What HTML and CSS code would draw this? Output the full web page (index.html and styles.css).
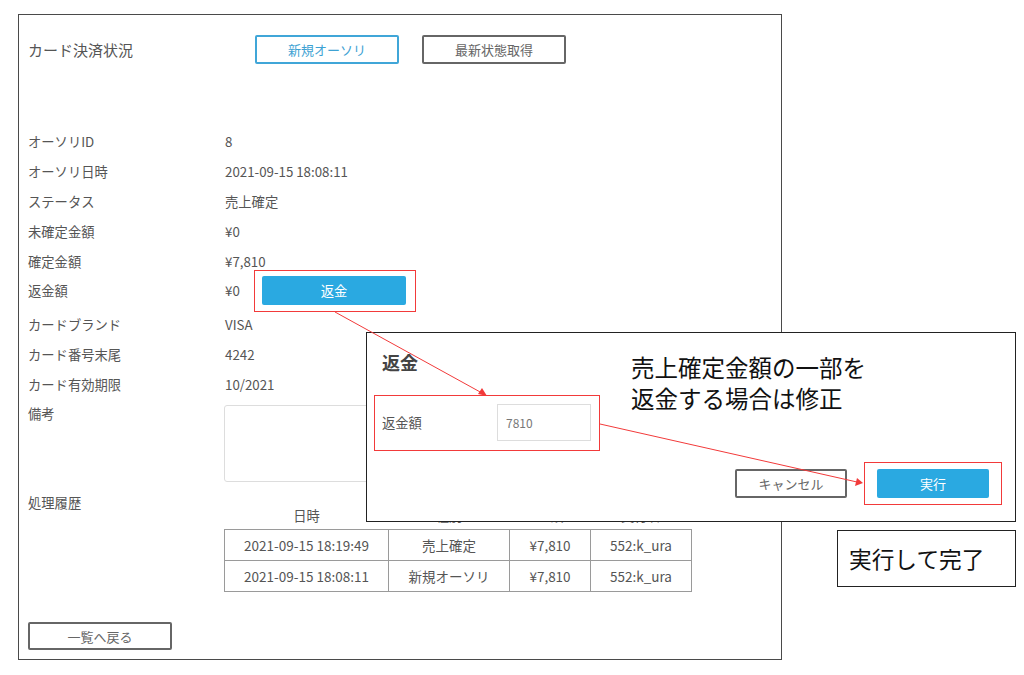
FILE: index.html
```html
<!DOCTYPE html>
<html lang="ja">
<head>
    <meta charset="UTF-8">
    <meta name="viewport" content="width=device-width, initial-scale=1.0">
    <title>カード決済状況</title>
    <link rel="stylesheet" href="styles.css">
</head>
<body>
    <div class="stage">
        <div class="panel">
            <div class="panel-head">
                <div class="panel-title">カード決済状況</div>
                <button class="btn btn-outline-blue">新規オーソリ</button>
                <button class="btn btn-outline">最新状態取得</button>
            </div>

            <div class="info">
                <div class="row"><div class="label">オーソリID</div><div class="value">8</div></div>
                <div class="row"><div class="label">オーソリ日時</div><div class="value">2021-09-15 18:08:11</div></div>
                <div class="row"><div class="label">ステータス</div><div class="value">売上確定</div></div>
                <div class="row"><div class="label">未確定金額</div><div class="value">¥0</div></div>
                <div class="row"><div class="label">確定金額</div><div class="value">¥7,810</div></div>
                <div class="row row-refund">
                    <div class="label">返金額</div>
                    <div class="value value-short">¥0</div>
                    <button class="btn btn-blue btn-refund">返金</button>
                </div>
                <div class="row"><div class="label">カードブランド</div><div class="value">VISA</div></div>
                <div class="row"><div class="label">カード番号末尾</div><div class="value">4242</div></div>
                <div class="row"><div class="label">カード有効期限</div><div class="value">10/2021</div></div>
                <div class="row row-memo">
                    <div class="label">備考</div>
                    <textarea class="memo"></textarea>
                </div>
                <div class="row row-history">
                    <div class="label">処理履歴</div>
                    <table class="history">
                        <thead>
                            <tr><th class="c-date">日時</th><th class="c-type">種別</th><th class="c-amount">金額</th><th class="c-user">実行者</th></tr>
                        </thead>
                        <tbody>
                            <tr><td>2021-09-15 18:19:49</td><td>売上確定</td><td>¥7,810</td><td>552:k_ura</td></tr>
                            <tr><td>2021-09-15 18:08:11</td><td>新規オーソリ</td><td>¥7,810</td><td>552:k_ura</td></tr>
                        </tbody>
                    </table>
                </div>
            </div>

            <button class="btn btn-outline btn-back">一覧へ戻る</button>
        </div>

        <!-- refund dialog -->
        <div class="dialog">
            <div class="dialog-title">返金</div>
            <div class="dialog-field">
                <div class="dialog-label">返金額</div>
                <input class="dialog-input" type="text" value="7810">
            </div>
            <div class="dialog-foot">
                <button class="btn btn-outline btn-dialog">キャンセル</button>
                <button class="btn btn-blue btn-dialog">実行</button>
            </div>
        </div>

        <!-- annotations -->
        <div class="mark mark-refund"></div>
        <div class="mark mark-field"></div>
        <div class="mark mark-run"></div>
        <div class="note note-edit">売上確定金額の一部を<br>返金する場合は修正</div>
        <div class="note note-done">実行して完了</div>

        <svg class="arrows" width="1024" height="675" viewBox="0 0 1024 675">
            <line x1="335" y1="312" x2="482" y2="393" stroke="#f23a3a" stroke-width="1"/>
            <polygon points="487,396 478,394 482,388" fill="#f23a3a"/>
            <line x1="600" y1="424" x2="857" y2="482" stroke="#f23a3a" stroke-width="1"/>
            <polygon points="863,483 855,486 857,478" fill="#f23a3a"/>
        </svg>
    </div>
</body>
</html>
```

FILE: styles.css
```css
body, html {
    margin: 0;
    background-color: #fff;
    font-family: "Noto Sans CJK JP", "Noto Sans", sans-serif;
    color: #555;
}
.stage {
    position: relative;
    width: 1024px;
    height: 675px;
    overflow: hidden;
    padding-top: 14px;
    padding-left: 18px;
    box-sizing: border-box;
}
.panel {
    width: 764px;
    height: 646px;
    box-sizing: border-box;
    border: 1px solid #4a4a4a;
    padding: 20px 9px 0;
}
.panel-head {
    display: flex;
    align-items: center;
    height: 28px;
}
.panel-title {
    width: 227px;
    font-size: 15px;
    color: #555;
}
.btn {
    font-family: inherit;
    font-size: 13px;
    background: #fff;
    cursor: pointer;
    padding: 0;
    box-sizing: border-box;
}
.btn-outline-blue {
    width: 144px;
    height: 29px;
    border: 2px solid #40a6d8;
    border-radius: 2px;
    color: #3ea2d3;
}
.btn-outline {
    width: 144px;
    height: 29px;
    border: 2px solid #666;
    border-radius: 2px;
    color: #666;
}
.panel-head .btn-outline {
    margin-left: 23px;
}
.btn-blue {
    background-color: #2aa9e1;
    border: none;
    border-radius: 2px;
    color: #fff;
}

.info {
    margin-top: 63px;
}
.row {
    display: flex;
    align-items: center;
    height: 30px;
    font-size: 13.3px;
}
.label {
    width: 197px;
    flex-shrink: 0;
    color: #555;
}
.value {
    color: #555;
}
.row-refund {
    height: 33px;
    align-items: flex-start;
}
.row-refund .label, .row-refund .value {
    line-height: 30px;
}
.value-short {
    width: 37px;
}
.btn-refund {
    width: 144px;
    height: 29px;
    font-size: 13.3px;
}
.row-memo {
    height: auto;
    align-items: flex-start;
}
.row-memo .label {
    line-height: 30px;
}
.memo {
    margin-top: 6px;
    margin-left: -1px;
    width: 290px;
    height: 77px;
    box-sizing: border-box;
    border: 1px solid #ddd;
    border-radius: 3px;
    resize: none;
}
.row-history {
    height: auto;
    align-items: flex-start;
    margin-top: 6px;
}
.row-history .label {
    line-height: 30px;
}
.history {
    margin-top: 15px;
    margin-left: -1px;
    border-collapse: collapse;
    font-size: 13.5px;
    color: #555;
}
.history th {
    font-weight: normal;
    height: 26px;
    padding: 0;
    vertical-align: top;
    line-height: 26px;
    font-size: 13.3px;
}
.history td {
    border: 1px solid #9a9a9a;
    height: 30px;
    padding: 0;
    text-align: center;
}
.c-date { width: 164px; }
.c-type { width: 121px; }
.c-amount { width: 81px; }
.c-user { width: 101px; }

.btn-back {
    display: block;
    margin-top: 30px;
    height: 28px;
}

.dialog {
    position: absolute;
    left: 366px;
    top: 332px;
    width: 650px;
    height: 190px;
    box-sizing: border-box;
    background: #fff;
    border: 1px solid #222;
    padding: 16px 26px 0 15px;
}
.dialog-title {
    font-size: 18px;
    font-weight: bold;
    color: #444;
    line-height: 26px;
}
.dialog-field {
    display: flex;
    align-items: center;
    margin-top: 29px;
    height: 36px;
    font-size: 13.3px;
}
.dialog-label {
    width: 115px;
}
.dialog-input {
    width: 94px;
    height: 37px;
    box-sizing: border-box;
    border: 1px solid #ddd;
    padding: 0 8px;
    font-family: inherit;
    font-size: 12px;
    color: #777;
}
.dialog-foot {
    display: flex;
    justify-content: flex-end;
    gap: 30px;
    margin-top: 29px;
}
.btn-dialog {
    width: 112px;
    height: 29px;
}

.mark {
    position: absolute;
    border: 1px solid #f23a3a;
}
.mark-refund {
    left: 254px;
    top: 270px;
    width: 160px;
    height: 40px;
}
.mark-field {
    left: 374px;
    top: 395px;
    width: 224px;
    height: 54px;
}
.mark-run {
    left: 864px;
    top: 462px;
    width: 136px;
    height: 41px;
}
.note {
    position: absolute;
    font-size: 23.5px;
    color: #111;
}
.note-edit {
    left: 631px;
    top: 352px;
    line-height: 31px;
}
.note-done {
    left: 837px;
    top: 530px;
    width: 179px;
    height: 57px;
    box-sizing: border-box;
    border: 1px solid #222;
    padding-left: 11px;
    font-size: 22.7px;
    line-height: 55px;
}
.arrows {
    position: absolute;
    left: 0;
    top: 0;
    pointer-events: none;
}
```
